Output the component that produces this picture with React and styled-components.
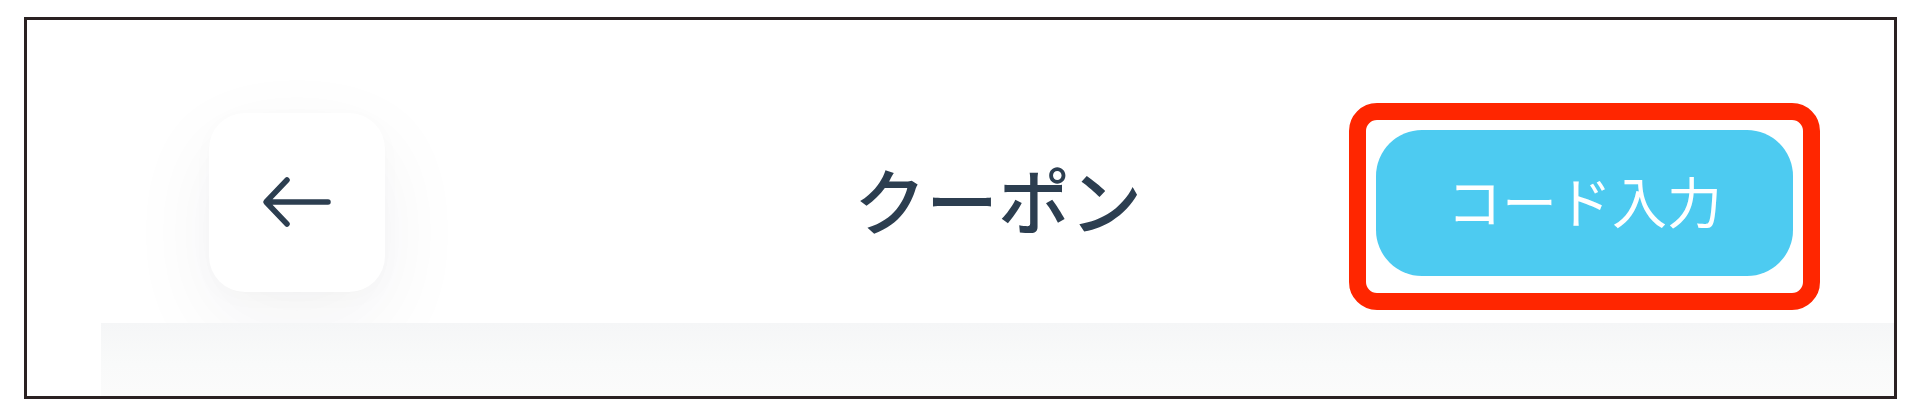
import styled, { createGlobalStyle } from "styled-components";

const GlobalStyle = createGlobalStyle`
  html, body {
    margin: 0;
    padding: 0;
    background: #ffffff;
  }
  body {
    font-family: "Noto Sans CJK JP", "Noto Sans", sans-serif;
  }
`;

const Frame = styled.div`
  box-sizing: border-box;
  width: 1873px;
  height: 382px;
  margin: 17px 0 0 24px;
  border: 3px solid #2a2122;
  background: #ffffff;
  display: flex;
  flex-direction: column;
  overflow: hidden;
`;

const Header = styled.header`
  box-sizing: border-box;
  height: 303px;
  padding: 61px 74px 0 182px;
  display: flex;
  align-items: center;
`;

const BackButton = styled.button`
  width: 176px;
  height: 179px;
  border: none;
  border-radius: 36px;
  background: #ffffff;
  box-shadow: 0 30px 90px rgba(30, 40, 60, 0.055), 0 6px 24px rgba(30, 40, 60, 0.02);
  display: flex;
  align-items: center;
  justify-content: center;
  padding: 0;
  cursor: pointer;
`;

const Title = styled.h1`
  margin: 0 0 8px 469px;
  font-size: 72px;
  font-weight: 500;
  line-height: 1;
  color: #2c3e50;
  letter-spacing: 0;
`;

const Highlight = styled.div`
  margin-left: auto;
  margin-top: 8px;
  box-sizing: border-box;
  border: 17px solid #ff2600;
  border-radius: 28px;
  padding: 10px 10px 17px 10px;
`;

const CodeButton = styled.button`
  width: 417px;
  height: 146px;
  border: none;
  border-radius: 46px;
  background: #4dcbf1;
  color: #ffffff;
  font-family: "Noto Sans CJK JP", "Noto Sans", sans-serif;
  font-size: 55px;
  font-weight: 400;
  line-height: 1;
  padding: 0 0 6px 0;
  display: flex;
  align-items: center;
  justify-content: center;
  cursor: pointer;
`;

const Strip = styled.div`
  flex: 1;
  margin-left: 74px;
  background: linear-gradient(180deg, #f5f6f7 0%, #f9fafa 55%, #fbfbfb 100%);
`;

const ArrowIcon = () => (
  <svg width="70" height="52" viewBox="0 0 70 52" fill="none">
    <path
      d="M66 26H5M25 4L4 26L25 48"
      stroke="#2c3e50"
      strokeWidth="5.5"
      strokeLinecap="round"
      strokeLinejoin="round"
    />
  </svg>
);

const App = () => {
  return (
    <>
      <GlobalStyle />
      <Frame>
        <Header>
          <BackButton aria-label="戻る">
            <ArrowIcon />
          </BackButton>
          <Title>クーポン</Title>
          <Highlight>
            <CodeButton>コード入力</CodeButton>
          </Highlight>
        </Header>
        <Strip />
      </Frame>
    </>
  );
};

export default App;
